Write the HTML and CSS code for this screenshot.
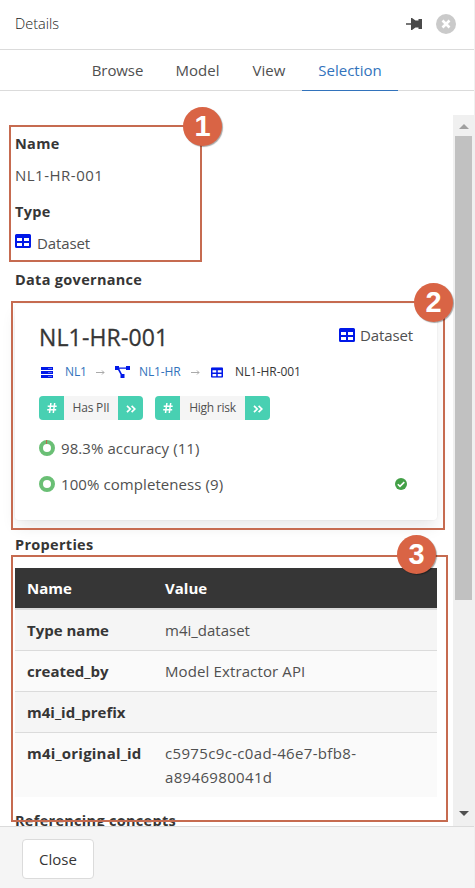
FILE: index.html
```html
<!DOCTYPE html>
<html lang="en">
<head>
<meta charset="utf-8">
<title>Details</title>
<link rel="stylesheet" href="styles.css">
</head>
<body>
<svg class="defs" aria-hidden="true">
  <symbol id="table" viewBox="0 0 16 14"><path fill-rule="evenodd" d="M1.5 0h13A1.5 1.5 0 0 1 16 1.5v11a1.5 1.5 0 0 1-1.5 1.5h-13A1.5 1.5 0 0 1 0 12.500v-11A1.500 1.500 0 0 1 1.500 0zM2 4v3h5V4zm7 0v3h5V4zM2 9v3h5V9zm7 0v3h5V9z"/></symbol>
  <symbol id="chevrons" viewBox="0 0 10 8"><path d="M1 .8 4.200 4 1 7.200M5.600 .8 8.800 4 5.600 7.200" fill="none" stroke="#fff" stroke-width="1.700"/></symbol>
  <symbol id="hash" viewBox="0 0 10 10"><path d="M3.900 0 2.500 10M7.700 0 6.300 10M.7 3.200h9M.2 6.800h9" fill="none" stroke="#fff" stroke-width="1.500"/></symbol>
</svg>
<div class="panel">
  <header class="header">
    <span class="heading">Details</span>
    <svg class="pin" viewBox="0 0 16 12"><path d="M0 5.200h5V0h1l3.500 2.500h3V1H16v10h-3.500V9.500h-3L6 12H5V6.800H0z"/></svg>
    <svg class="dismiss" viewBox="0 0 20 20"><circle cx="10" cy="10" r="10"/><path d="m6.500 6.500 7 7m0-7-7 7"/></svg>
  </header>
  <nav class="tabs">
    <a class="tab browse">Browse</a><a class="tab model">Model</a><a class="tab view">View</a><a class="tab active">Selection</a>
  </nav>
  <div class="viewport">
    <main class="content">
      <h3>Name</h3>
      <p class="name">NL1-HR-001</p>
      <h3>Type</h3>
      <p class="type"><svg class="ico"><use href="#table"/></svg><span>Dataset</span></p>
      <h3 class="governance">Data governance</h3>
      <section class="card">
        <div class="card-top">
          <h2>NL1-HR-001</h2>
          <div class="kind"><svg class="ico"><use href="#table"/></svg><span>Dataset</span></div>
        </div>
        <div class="crumbs">
          <svg class="server" viewBox="0 0 12 11"><path d="M0 0h12v3H0zm0 4h12v3H0zm0 4h12v3H0z"/><path class="leds" d="M7.500 1.500h1m1 0h1m-3 4h1m1 0h1m-3 4h1m1 0h1"/></svg>
          <a class="root">NL1</a>
          <svg class="arrow" viewBox="0 0 9 5"><path d="M0 2.500h8M6 .5l2 2-2 2"/></svg>
          <svg class="tree" viewBox="0 0 15 12"><path d="M0 0h4v1.500h7V0h4v4h-4V2.700H4.300L7 8h2.500v4h-4V8.500L3 4H0z"/></svg>
          <a class="parent">NL1-HR</a>
          <svg class="arrow" viewBox="0 0 9 5"><path d="M0 2.500h8M6 .5l2 2-2 2"/></svg>
          <svg class="mini" viewBox="0 0 16 14"><use href="#table" width="16" height="14"/></svg>
          <span class="leaf">NL1-HR-001</span>
        </div>
        <div class="tags">
          <div class="tag pii"><b><svg class="hash"><use href="#hash"/></svg></b><span>Has PII</span><b><svg class="chev"><use href="#chevrons"/></svg></b></div>
          <div class="tag risk"><b><svg class="hash"><use href="#hash"/></svg></b><span>High risk</span><b><svg class="chev"><use href="#chevrons"/></svg></b></div>
        </div>
        <div class="metric accuracy">
          <svg class="donut" viewBox="0 0 16 16"><circle cx="8" cy="8" r="6"/><path d="M7.500 0v4"/></svg>
          <span>98.3% accuracy (11)</span>
        </div>
        <div class="metric complete">
          <svg class="donut" viewBox="0 0 16 16"><circle cx="8" cy="8" r="6"/></svg>
          <span>100% completeness (9)</span>
          <svg class="check" viewBox="0 0 12 12"><circle cx="6" cy="6" r="6"/><path d="m2.800 6.200 2.200 2.200 4.300-4.300"/></svg>
        </div>
      </section>
      <h3 class="props">Properties</h3>
      <table>
        <thead><tr><th>Name</th><th>Value</th></tr></thead>
        <tbody>
          <tr><th>Type name</th><td>m4i_dataset</td></tr>
          <tr><th>created_by</th><td class="author">Model Extractor API</td></tr>
          <tr><th>m4i_id_prefix</th><td></td></tr>
          <tr><th class="orig">m4i_original_id</th><td class="uuid">c5975c9c-c0ad-46e7-bfb8-<br>a8946980041d</td></tr>
        </tbody>
      </table>
      <h3 class="refs">Referencing concepts</h3>
    </main>
    <div class="scrollbar"><i class="up"></i><div class="thumb"></div><i class="down"></i></div>
  </div>
  <footer class="footer"><button>Close</button></footer>
</div>
<div class="callout one"><span>1</span></div>
<div class="callout two"><span>2</span></div>
<div class="callout three"><span>3</span></div>
</body>
</html>
```
FILE: styles.css
```css
* { box-sizing: border-box; }
body { margin: 0; width: 475px; height: 888px; overflow: hidden; position: relative; background: #fff; color: #505050; font: 15px/24px "Open Sans", "Noto Sans", sans-serif; }
h2, h3, p { margin: 0; }
.defs { position: absolute; width: 0; height: 0; }
.panel { height: 888px; display: flex; flex-direction: column; border-right: 1px solid #f0f0f0; }
.header { height: 50px; flex: none; display: flex; align-items: center; padding: 0 10px 1px 15px; border-bottom: 1px solid #dbdbdb; }
.heading { flex: 1; font-size: 14.500px; font-weight: 300; color: #222; }
.pin { width: 16px; height: 12px; fill: #4a4a4a; margin-right: 14px; }
.dismiss { width: 20px; height: 20px; margin-right: 8px; }
.dismiss circle { fill: #cacaca; }
.dismiss path { stroke: #fff; stroke-width: 2.600; }
.tabs { height: 41px; flex: none; display: flex; justify-content: center; border-bottom: 1px solid #dbdbdb; }
.tab { height: 41px; padding-top: 8px; text-align: center; border-bottom: 1px solid #dbdbdb; }
.browse { width: 83px; letter-spacing: -.1px; } .model { width: 77px; } .view { width: 66px; }
.active { width: 96px; color: #3273bc; border-color: #3273bc; }
.viewport { flex: 1; min-height: 0; margin-top: 24px; display: flex; }
.content { flex: 1; min-width: 0; overflow: hidden; padding: 17px 16px 0 15px; }
h3 { font-size: 14.500px; line-height: 24px; font-weight: 700; color: #363636; letter-spacing: .3px; }
.name { margin: 7px 0 13px; letter-spacing: .5px; }
.type { display: flex; margin: 7px 0 13px; gap: 6px; }
.type span, .kind span { letter-spacing: -.1px; }
.ico { width: 16px; height: 14px; fill: #0018e8; }
.type .ico { margin-top: 3px; }
.card { height: 216px; margin: 12px 0 13px; padding: 19px 24px; border-radius: 4px; box-shadow: 0 8px 16px -2px rgba(10,10,10,.1), 0 0 0 1px rgba(10,10,10,.02); }
.card-top { display: flex; justify-content: space-between; height: 29px; }
h2 { font-size: 23px; line-height: 28px; font-weight: 500; color: #363636; letter-spacing: .15px; -webkit-text-stroke: .3px #363636; }
.kind { display: flex; gap: 5px; }
.kind .ico { margin-top: 5px; }
.crumbs { display: flex; align-items: center; height: 20px; margin-top: 10px; font-size: 12px; letter-spacing: -.1px; }
.crumbs a { color: #3273bc; }
.crumbs svg { flex: none; fill: #0018e8; }
.server { width: 14px; height: 11px; margin: 0 11px 0 1px; }
.leds { stroke: #b8c0ff; stroke-width: 1; }
.root { width: 31px; } .parent { width: 52px; }
.crumbs .arrow { width: 9px; height: 5px; fill: none; stroke: #aaa; stroke-width: 1; }
.tree { width: 15px; height: 12px; margin: 0 9px 0 10px; }
.mini { width: 12px; height: 11px; margin: 0 12px 0 11px; }
.leaf { color: #363636; }
.tags { display: flex; gap: 12px; margin-top: 14px; }
.tag { display: flex; height: 24px; border-radius: 4px; overflow: hidden; background: #f5f5f5; font-size: 12px; }
.tag b { width: 25px; background: #48d0b2; display: flex; align-items: center; justify-content: center; }
.tag span { text-align: center; width: 54px; letter-spacing: -.2px; }
.tag.risk span { width: 65px; letter-spacing: -.25px; }
.hash { width: 10px; height: 10px; } .chev { width: 10px; height: 8px; margin-top: 2px; }
.metric { display: flex; align-items: center; gap: 6px; height: 24px; margin-top: 12px; }
.accuracy { margin-top: 16px; }
.metric span { flex: 1; letter-spacing: .08px; }
.donut { width: 16px; height: 16px; }
.donut circle { fill: none; stroke: #6abf75; stroke-width: 4; }
.donut path { stroke: #b86b4b; stroke-width: 1; }
.check { width: 12px; height: 12px; margin-right: 6px; }
.check circle { fill: #43a047; }
.check path { fill: none; stroke: #fff; stroke-width: 1.600; }
table { width: 422px; margin: 11px 0 12px; border-collapse: separate; border-spacing: 0; table-layout: fixed; color: #363636; }
th, td { text-align: left; vertical-align: top; padding: 8px 12px; white-space: nowrap; }
td { font-weight: 400; color: #505050; }
.author { letter-spacing: .12px; }
.orig { letter-spacing: .2px; }
.uuid { letter-spacing: .34px; }
th:first-child { width: 138px; }
thead th { background: #363636; color: #fff; border-bottom: 2px solid #dbdbdb; height: 42px; }
tbody th, tbody td { height: 41px; border-bottom: 1px solid #dbdbdb; background: #fafafa; }
tbody tr:nth-child(odd) > * { background: #f5f5f5; }
tbody tr:last-child > * { background: #fafafa; border: 0; height: 64px; }
.scrollbar { width: 21px; background: #f0f0f0; display: flex; flex-direction: column; align-items: center; padding: 9px 0 10px; }
.up, .down { border: 5px solid transparent; width: 0; height: 0; }
.up { border-top: 0; border-bottom-color: #a0a0a0; }
.down { border-bottom: 0; border-top-color: #505050; margin-top: auto; }
.thumb { width: 17px; height: 464px; margin-top: 7px; background: #c1c1c1; }
.footer { height: 62px; flex: none; padding: 12px 22px; border-top: 1px solid #dbdbdb; background: #f5f5f5; }
button { display: block; width: 72px; height: 40px; padding: 0; border: 1px solid #dbdbdb; border-radius: 4px; background: #fff; color: #363636; font: inherit; }
.callout { position: absolute; border: 2px solid #c66b50; }
.one { left: 9px; top: 125px; width: 193px; height: 137px; }
.two { left: 11px; top: 301px; width: 434px; height: 229px; }
.three { left: 11px; top: 555px; width: 437px; height: 267px; }
.callout span { position: absolute; top: -20px; right: -22px; width: 39px; height: 39px; border-radius: 50%; background: #d96445; color: #fff; box-shadow: 1px 1px 1px rgba(0,0,0,.35); font: 700 29px/38px "Liberation Sans", sans-serif; text-align: center; }
.callout.two span { right: -10px; }
.callout.three span { right: 10px; top: -22px; }
```
